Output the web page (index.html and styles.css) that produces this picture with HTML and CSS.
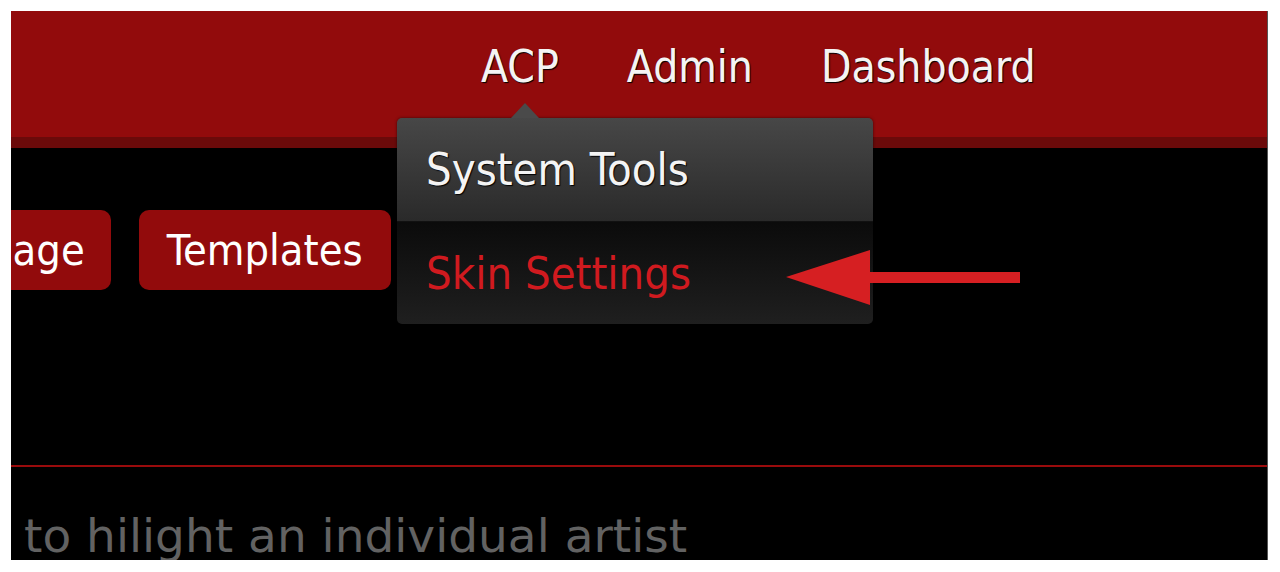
FILE: index.html
```html
<!DOCTYPE html>
<html lang="en">
<head>
    <meta charset="UTF-8">
    <title>ACP - Skin Settings</title>
    <link rel="stylesheet" href="styles.css">
</head>
<body>
    <div class="frame">
        <div class="header">
            <ul class="topnav">
                <li class="current">ACP</li>
                <li>Admin</li>
                <li>Dashboard</li>
            </ul>
        </div>
        <div class="main">
            <div class="btn-row">
                <a class="btn btn-first" href="#">Manage</a>
                <a class="btn" href="#">Templates</a>
            </div>
            <div class="rule"></div>
            <p class="note">to hilight an individual artist</p>
        </div>

        <!-- dropdown under ACP -->
        <div class="dropdown">
            <a class="dd-item dd-top" href="#">System Tools</a>
            <a class="dd-item dd-active" href="#">Skin Settings</a>
        </div>

        <svg class="arrow" width="236" height="58" viewBox="0 0 236 58">
            <polygon points="0,28 84,1 84,56" fill="#d61f22"/>
            <rect x="82" y="23" width="152" height="11" fill="#d61f22"/>
        </svg>
    </div>
</body>
</html>
```

FILE: styles.css
```css
* {
  box-sizing: border-box;
}

body {
  margin: 0;
  background: #fff;
  font-family: "DejaVu Sans Condensed", "DejaVu Sans", sans-serif;
  font-stretch: condensed;
}

.frame {
  position: relative;
  margin: 11px 12px 0 11px;
  height: 549px;
  background: #000;
  overflow: hidden;
  border-right: 1px solid #555;
}

.header {
  height: 137px;
  background: #920b0c;
  border-bottom: 11px solid #6b0a0a;
}

.topnav {
  list-style: none;
  margin: 0;
  padding: 30px 0 0 436px;
  display: flex;
}

.topnav li {
  padding: 0 34px;
  font-size: 44px;
  color: #f4f4f4;
  text-shadow: 1px 1px 1px #000;
}

.main {
  padding-top: 62px;
}

.btn-row {
  display: flex;
  gap: 28px;
  height: 80px;
}

.btn {
  display: flex;
  align-items: center;
  padding: 0 28px;
  background: #920b0c;
  border-radius: 10px;
  color: #fff;
  text-decoration: none;
  font-size: 43px;
}

.btn-first {
  margin-left: -108px;
  padding-right: 26px;
}

.rule {
  margin-top: 175px;
  height: 2px;
  background: #9a0b0c;
}

.note {
  margin: 41px 0 0 13px;
  font-family: "DejaVu Sans", sans-serif;
  font-stretch: normal;
  font-size: 47px;
  color: #626262;
  white-space: nowrap;
}

.dropdown {
  position: absolute;
  left: 386px;
  top: 107px;
  width: 476px;
  border-radius: 5px;
  box-shadow: 0 0 3px rgba(0,0,0,0.6);
}

.dropdown:before {
  content: "";
  position: absolute;
  left: 114px;
  top: -15px;
  border-left: 14px solid transparent;
  border-right: 14px solid transparent;
  border-bottom: 15px solid #4a4a4a;
}

.dd-item {
  display: block;
  height: 103px;
  padding: 25px 0 0 29px;
  font-size: 45px;
  text-decoration: none;
}

.dd-top {
  color: #f4f4f4;
  background: linear-gradient(#474747, #2a2a2a);
  border-radius: 5px 5px 0 0;
  text-shadow: 1px 1px 1px #000;
}

.dd-active {
  color: #d01a1f;
  background: linear-gradient(#0b0b0b, #1f1f1f);
  border-radius: 0 0 5px 5px;
  border-top: 1px solid #111;
}

.arrow {
  position: absolute;
  left: 775px;
  top: 238px;
}
```
